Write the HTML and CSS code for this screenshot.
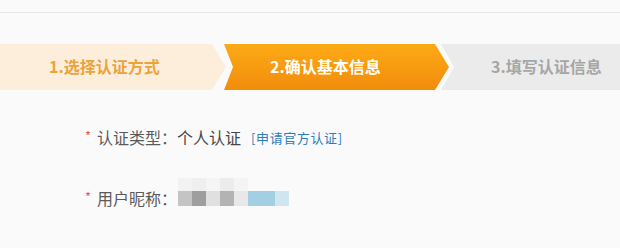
FILE: index.html
```html
<!DOCTYPE html>
<html lang="zh-CN">
<head>
<meta charset="utf-8">
<link rel="stylesheet" href="styles.css">
</head>
<body>
<div class="topbar"></div>
<div class="steps">
  <div class="step step-done"><span>1.选择认证方式</span></div>
  <div class="step step-current"><span>2.确认基本信息</span></div>
  <div class="step step-next"><span>3.填写认证信息</span></div>
</div>
<div class="form">
  <div class="row">
    <span class="req">*</span>
    <span class="label">认证类型：</span>
    <span class="value">个人认证</span>
    <a class="link" href="#">[申请官方认证]</a>
  </div>
  <div class="row">
    <span class="req">*</span>
    <span class="label">用户昵称：</span>
    <span class="mosaic">
      <i class="m u1"></i><i class="m u2"></i><i class="m u3"></i><i class="m u4"></i><i class="m u5"></i><i class="m u6"></i><i class="m u7"></i>
      <i class="m l1"></i><i class="m l2"></i><i class="m l3"></i><i class="m l4"></i><i class="m l5"></i><i class="m l6"></i><i class="m l7"></i>
    </span>
  </div>
</div>
</body>
</html>
```
FILE: styles.css
```css
html, body {
  margin: 0;
  padding: 0;
  background: #fafafa;
  font-family: "Noto Sans CJK SC", "Noto Sans", "Liberation Sans", sans-serif;
}
.topbar {
  height: 12px;
  border-bottom: 1px solid #e6e6e6;
}
.steps {
  display: flex;
  height: 46px;
  margin-top: 31px;
}
.step {
  height: 46px;
  display: flex;
  align-items: center;
  font-size: 16px;
  font-weight: bold;
  box-sizing: border-box;
}
.step span {
  line-height: 20px;
  margin-top: -3px;
}
.step-done {
  width: 226px;
  padding-left: 49px;
  background: #fdeedc;
  color: #eaa43a;
  clip-path: polygon(0 0, calc(100% - 14px) 0, 100% 50%, calc(100% - 14px) 100%, 0 100%);
}
.step-current {
  width: 227px;
  margin-left: -4px;
  padding-left: 48px;
  background: linear-gradient(#fdaa16, #f28c0c);
  color: #fff;
  clip-path: polygon(2px 0, calc(100% - 14px) 0, 100% 50%, calc(100% - 14px) 100%, 2px 100%, 11px 50%);
}
.step-next {
  flex: 1;
  margin-left: -8px;
  padding-left: 50px;
  background: #ebebeb;
  color: #a6a6a6;
  clip-path: polygon(0 0, 100% 0, 100% 100%, 0 100%, 13px 50%);
}
.form {
  padding-left: 85px;
  margin-top: 32px;
}
.row {
  display: flex;
  align-items: center;
  height: 30px;
  margin-bottom: 31px;
  color: #5a5a5a;
  font-size: 16px;
}
.req {
  color: #e8575c;
  font-size: 13px;
  width: 12px;
  margin-top: -4px;
}
.value {
  color: #464646;
}
.link {
  margin-left: 10px;
  font-size: 13px;
  letter-spacing: 0.6px;
  color: #2f7dbc;
  text-decoration: none;
}
.mosaic {
  display: grid;
  grid-template-columns: 14px 14px 14px 14px 14px 27px 14px;
  grid-template-rows: 13px 15px;
  margin-left: 1px;
  margin-top: -12px;
}
.m { display: block; }
.u1 { background: #f2f2f2; }
.u2 { background: #efefef; }
.u3 { background: #f5f5f5; }
.u4 { background: #ececec; }
.u5 { background: #f4f4f4; }
.u6, .u7 { background: transparent; }
.l1 { background: #c4c4c4; }
.l2 { background: #9e9e9e; }
.l3 { background: #e0e0e0; }
.l4 { background: #b3b3b3; }
.l5 { background: #e8e8e8; }
.l6 { background: #a3cfe3; }
.l7 { background: #cfe5ef; }
```
